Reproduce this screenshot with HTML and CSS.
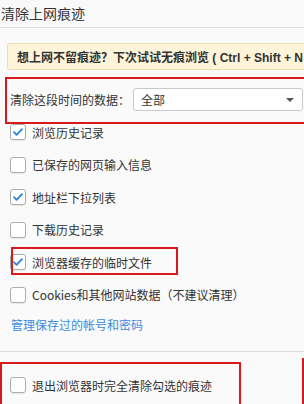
FILE: index.html
```html
<!DOCTYPE html>
<html lang="zh-CN">
<head>
    <meta charset="UTF-8">
    <title>清除上网痕迹</title>
    <link rel="stylesheet" href="styles.css">
</head>
<body>
    <div class="dialog">
        <div class="header">清除上网痕迹</div>

        <!-- 提示 -->
        <div class="notice">想上网不留痕迹？下次试试无痕浏览<span class="keys"> ( Ctrl + Shift + N )</span></div>

        <!-- 时间范围 -->
        <div class="range">
            <span class="range-label">清除这段时间的数据：</span>
            <div class="select">
                <span>全部</span>
                <span class="arrow"></span>
            </div>
            <span class="mark mark-range"></span>
        </div>

        <!-- 选项 -->
        <div class="options">
            <div class="opt"><span class="box checked"></span>浏览历史记录</div>
            <div class="opt"><span class="box"></span>已保存的网页输入信息</div>
            <div class="opt"><span class="box checked"></span>地址栏下拉列表</div>
            <div class="opt"><span class="box"></span>下载历史记录</div>
            <div class="opt"><span class="box checked"></span>浏览器缓存的临时文件<span class="mark mark-cache"></span></div>
            <div class="opt"><span class="box"></span>Cookies和其他网站数据（不建议清理）</div>
        </div>

        <div class="links"><a href="#">管理保存过的帐号和密码</a></div>

        <!-- 底部 -->
        <div class="footer">
            <div class="opt"><span class="box"></span>退出浏览器时完全清除勾选的痕迹</div>
            <span class="mark mark-exit"></span>
            <span class="mark mark-button"></span>
        </div>
    </div>
</body>
</html>
```

FILE: styles.css
```css
html, body {
    margin: 0;
    padding: 0;
    overflow: hidden;
}

body {
    font-family: "Noto Sans CJK SC", "Noto Sans", sans-serif;
    background-color: #fafafa;
    color: #333;
    font-size: 12px;
}

.dialog {
    width: 460px;
}

/* 标题 */
.header {
    height: 27px;
    line-height: 26px;
    font-size: 14px;
    padding-left: 1px;
    border-bottom: 1px solid #dedede;
    background-color: #f9f9f9;
}

/* 提示条 */
.notice {
    margin: 15px 0 0 7px;
    height: 25px;
    line-height: 25px;
    padding-left: 9px;
    background-color: #fdf4d9;
    border: 1px solid #f1dda8;
    border-radius: 2px;
    font-size: 12px;
    font-weight: bold;
    white-space: nowrap;
    color: #333;
}

.keys {
    font-family: "Liberation Sans", Arial, sans-serif;
    font-size: 12px;
    white-space: pre;
}

/* 时间范围 */
.range {
    position: relative;
    margin-top: 13px;
    height: 33px;
    display: flex;
    align-items: center;
    padding-left: 10px;
}

.range-label {
    width: 123px;
}

.select {
    width: 153px;
    height: 21px;
    padding: 0 8px 0 7px;
    border: 1px solid #c9c9c9;
    border-radius: 3px;
    background-color: #fff;
    display: flex;
    align-items: center;
    justify-content: space-between;
}

.arrow {
    width: 0;
    height: 0;
    border-left: 4px solid transparent;
    border-right: 4px solid transparent;
    border-top: 4px solid #555;
    margin-top: 1px;
}

/* 红框标注 */
.mark {
    position: absolute;
    border: 2px solid #d9191c;
    pointer-events: none;
}

.mark-range {
    top: -6px;
    left: 5px;
    width: 420px;
    height: 43px;
}

.mark-cache {
    top: 1px;
    left: 1px;
    width: 163px;
    height: 24px;
}

.mark-exit {
    top: 10px;
    left: 0;
    width: 237px;
    height: 80px;
}

.mark-button {
    top: 6px;
    left: 302px;
    width: 120px;
    height: 80px;
}

/* 选项 */
.options {
    padding-left: 10px;
}

.opt {
    position: relative;
    height: 32.5px;
    display: flex;
    align-items: center;
    white-space: nowrap;
}

.box {
    width: 14px;
    height: 14px;
    border: 1px solid #adadad;
    border-radius: 3px;
    background-color: #fff;
    box-shadow: 0 1px 1px rgba(0, 0, 0, 0.08);
    margin-right: 6px;
    flex-shrink: 0;
}

.box.checked {
    background-image: url("data:image/svg+xml,%3Csvg xmlns='http://www.w3.org/2000/svg' viewBox='0 0 14 14'%3E%3Cpath d='M3 7.2l2.6 2.6L11 4.2' fill='none' stroke='%232f86de' stroke-width='1.9' stroke-linecap='round' stroke-linejoin='round'/%3E%3C/svg%3E");
    background-size: 14px 14px;
}

.links {
    height: 27px;
    line-height: 27px;
    padding-left: 11px;
    margin-bottom: 13px;
}

.links a {
    color: #3a8ae0;
    text-decoration: none;
}

/* 底部 */
.footer {
    position: relative;
    border-top: 1px solid #dcdcdc;
    padding: 17px 0 0 10px;
    height: 60px;
}
```
